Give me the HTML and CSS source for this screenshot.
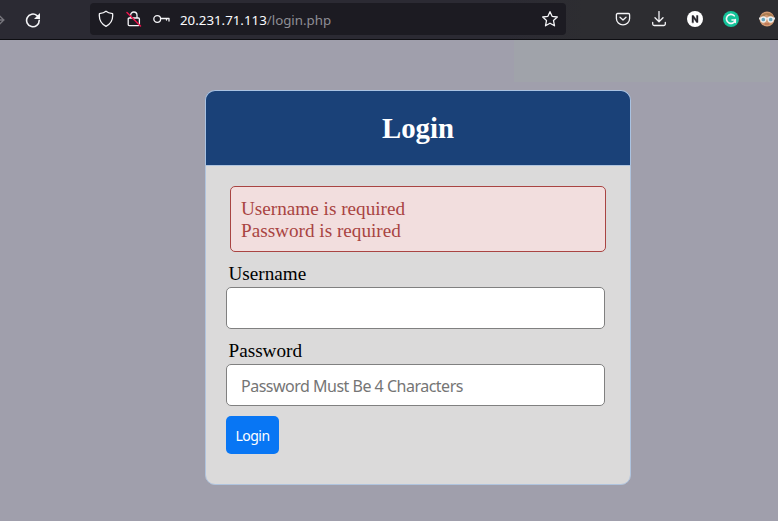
FILE: index.html
```html
<!DOCTYPE html>
<html lang="en">
<head>
<meta charset="utf-8">
<title>Login</title>
<link rel="stylesheet" href="styles.css">
</head>
<body>
<header class="toolbar">
  <svg class="forward" width="6" height="16" viewBox="0 0 6 16"><path d="M0 8h4M0 4.3L3.8 8L0 11.7" /></svg>
  <svg class="reload" width="16" height="16" viewBox="0 0 16 16"><path d="M14.2 8.3A6.3 6.3 0 1 1 12 3.6L13.4 4.8"/><path class="solid" d="M15 1v6H9z"/></svg>
  <div class="address">
    <svg class="shield" width="16" height="18" viewBox="0 0 16 18"><path d="M8 1.3C6.3 2.8 3.7 3.4 1.4 3.7C.8 9.5 3 13.8 8 16.3C13 13.8 15.2 9.5 14.6 3.7C12.3 3.4 9.7 2.8 8 1.3z"/></svg>
    <svg class="lock" width="16" height="18" viewBox="0 0 16 18"><path d="M4.6 8V5.2a3.2 3.2 0 0 1 6.4 0V8M3.2 8h9.2a1 1 0 0 1 1 1v5.600a1 1 0 0 1-1 1H3.200a1 1 0 0 1-1-1V9a1 1 0 0 1 1-1z"/><path class="slash" d="M1 2.500L14.500 16"/></svg>
    <svg class="key" width="17" height="12" viewBox="0 0 17 12"><circle cx="4.200" cy="6" r="3.400"/><path d="M7.600 5.500H16V8M13.500 5.500V7"/></svg>
    <span class="url"><span class="host">20.231.71.113</span>/login.php</span>
    <svg class="star" width="18" height="18" viewBox="0 0 18 18"><path d="M9 1.700L11.100 6.300L16.300 7L12.500 10.500L13.500 15.800L9 13.200L4.500 15.800L5.500 10.500L1.700 7L6.900 6.300z"/></svg>
  </div>
  <div class="extensions">
    <svg width="16" height="16" viewBox="0 0 16 16"><path d="M2.600 2.500h10.800a1.200 1.200 0 0 1 1.200 1.200V7.500a6.600 6.300 0 0 1-13.200 0V3.700a1.200 1.200 0 0 1 1.200-1.200zM5 6.300L8 9.100L11 6.300"/></svg>
    <svg width="16" height="16" viewBox="0 0 16 16"><path d="M8 .5V10.500M4 6.700L8 10.700L12 6.700M1.700 11.500V13a1.500 1.500 0 0 0 1.500 1.500h9.600a1.500 1.500 0 0 0 1.500-1.500V11.500"/></svg>
    <svg width="16" height="16" viewBox="0 0 16 16"><circle class="white" cx="8" cy="8" r="8"/><path class="dark" d="M5 11.500V4.500H6.500L9.500 8.800V4.500H11V11.500H9.500L6.500 7.200V11.500z"/></svg>
    <svg width="16" height="16" viewBox="0 0 16 16"><circle class="green" cx="8" cy="8" r="8"/><path class="gee" d="M11.200 4.800A4.500 4.500 0 1 0 12.300 9H9M12.300 8.500V11.500"/></svg>
    <svg width="16" height="16" viewBox="0 0 16 16"><circle class="skin" cx="8" cy="8" r="7.500"/><path class="hair" d="M1 7a7.200 6.500 0 0 1 14 0Q10 5 7 3.500Q5 6 1 7z"/><path class="rims" d="M0 7.500H16"/><circle class="lens" cx="4.300" cy="8.500" r="2.500"/><circle class="lens" cx="11.700" cy="8.500" r="2.500"/><path class="mouth" d="M6 13H10"/></svg>
  </div>
</header>
<main class="page">
  <section class="card">
    <div class="card-header"><h2>Login</h2></div>
    <form class="card-form">
      <div class="error"><p>Username is required</p><p>Password is required</p></div>
      <div class="group"><label for="username">Username</label><input id="username" type="text"></div>
      <div class="group"><label for="password">Password</label><input id="password" type="password" placeholder="Password Must Be 4 Characters"></div>
      <button type="button">Login</button>
    </form>
  </section>
</main>
</body>
</html>
```
FILE: styles.css
```css
* { box-sizing: border-box; margin: 0; }
body {
  height: 521px;
  overflow: hidden;
  display: flex;
  flex-direction: column;
  background: #a09fac;
  font: 19.2px/22px "Liberation Serif", serif;
}
svg { flex: none; fill: none; stroke: #f5f5f8; stroke-width: 1.3; stroke-linejoin: round; stroke-linecap: round; }
.toolbar {
  flex: none;
  height: 40px;
  display: flex;
  align-items: flex-start;
  background: linear-gradient(90deg, #2b2a33 65%, #2d2d31 75%);
  border-bottom: 1px solid #0e0e12;
}
.forward { margin-top: 12px; stroke: #77767d; }
.reload { margin: 12px 0 0 19px; stroke-width: 1.6; }
.solid { fill: #f5f5f8; stroke: none; }
.address {
  width: 476px;
  height: 32px;
  margin: 3px 0 0 49px;
  padding: 0 7px 0 8px;
  display: flex;
  align-items: center;
  border-radius: 4px;
  background: #1c1b22;
}
.lock { margin-left: 12px; }
.slash { stroke: #e8154c; stroke-width: 1.5; }
.key { margin-left: 11px; }
.url {
  margin-left: 10px;
  padding-top: 2px;
  font: 13.3px/18px "Noto Sans", sans-serif;
  color: #8f8e95;
  white-space: nowrap;
}
.host { color: #fbfbfe; }
.star { margin-left: auto; }
.extensions { display: flex; gap: 20px; margin: 11px 0 0 49px; }
.white { fill: #fff; stroke: none; }
.dark { fill: #26252c; stroke: #26252c; stroke-width: .4; }
.green { fill: #15c39a; stroke: none; }
.gee { stroke-width: 1.6; }
.skin { fill: #d29a73; stroke: none; }
.hair { fill: #a97b50; stroke: none; }
.rims { stroke: #e5e5e5; stroke-width: 2; }
.lens { fill: #66a5bd; stroke: #eee; stroke-width: 1.3; }
.mouth { stroke: #b15f43; stroke-width: 1; }
.page {
  flex: 1;
  padding: 50px 0 0 205px;
  background: linear-gradient(#a0a3aa, #a0a3aa) 514px 0 / 256px 42px no-repeat, #a09fac;
}
.card { width: 426px; }
.card-header {
  height: 75px;
  padding-top: 21px;
  border: 1px solid #a9c2e2;
  border-bottom: 0;
  border-radius: 10px 10px 0 0;
  background: #1a4178;
  color: #fff;
  text-align: center;
}
h2 { font-size: 28.8px; line-height: 32px; }
.card-form {
  height: 320px;
  padding: 20px;
  border: 1px solid #b0c4de;
  border-radius: 0 0 10px 10px;
  background: #dbdada;
}
.error {
  width: 376px;
  height: 66px;
  margin-left: 4px;
  padding: 11px 10px;
  border: 1px solid #a94442;
  border-radius: 5px;
  background: #f2dede;
  color: #a94442;
}
.group { margin-top: 11px; }
label { display: block; height: 24px; padding-left: 2.5px; color: #000; }
input {
  display: block;
  width: 379px;
  height: 42px;
  padding: 2px 14px 0;
  border: 1px solid gray;
  border-radius: 5px;
  background: #fff;
  font: 16px "Noto Sans", sans-serif;
  letter-spacing: -.5px;
}
input::placeholder { color: #757575; opacity: 1; }
button {
  display: block;
  width: 53px;
  height: 38px;
  margin-top: 10px;
  padding: 1px 0 0;
  border: 0;
  border-radius: 5px;
  background: #0876f4;
  color: #fff;
  font: 14px "Noto Sans", sans-serif;
  letter-spacing: -.5px;
}
```
